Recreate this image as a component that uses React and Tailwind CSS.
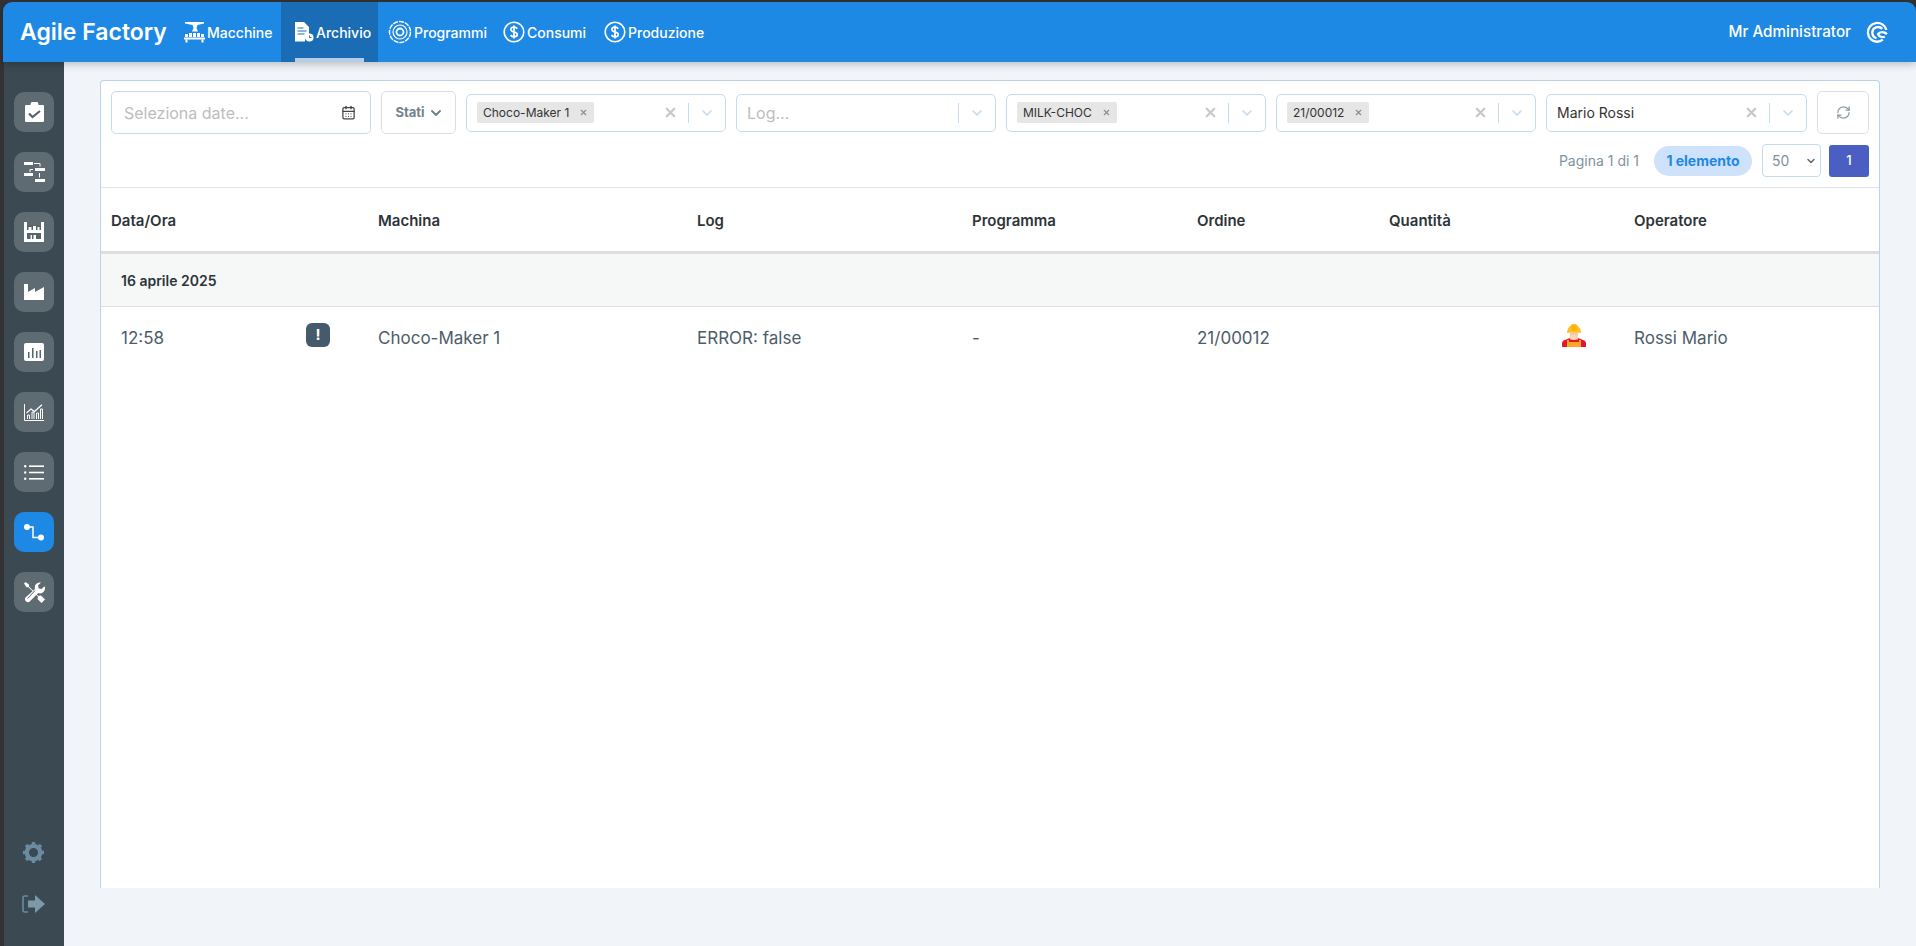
import { ChevronDown, RefreshCw, X, CalendarDays } from 'lucide-react'

// icone barra superiore
const MachineIcon = () => (
  <svg width="21" height="21" viewBox="0 0 21 21" fill="#fff" className="shrink-0">
    <path d="M1 0h19v1.600l-6.500 1.400-1 3 1.500 3.500H8l1.500-3.500-1-3-7.500-1.400z" />
    <rect x="1" y="12" width="3" height="3" /><rect x="5" y="11" width="3" height="4" /><rect x="9" y="11" width="3" height="4" /><rect x="13" y="11" width="3" height="4" /><rect x="17" y="12" width="3" height="3" />
    <rect x="0" y="15.500" width="21" height="2" />
    <rect x="1.500" y="17.500" width="2" height="3" /><rect x="17.500" y="17.500" width="2" height="3" />
  </svg>
)

const ArchiveIcon = () => (
  <svg width="20" height="20" viewBox="0 0 20 20" className="shrink-0">
    <path d="M1 0h9l5 5v9.500a5 5 0 0 0-4 5H1z" fill="#fff" />
    <path d="M3.500 6h6M3.500 9h9M3.500 12h7" stroke="#1a6db5" strokeWidth="1.200" />
    <circle cx="15.500" cy="15.500" r="4" fill="#fff" />
    <path d="M15.500 13.500v2h2" stroke="#1a6db5" strokeWidth="1" fill="none" />
  </svg>
)

const ProgramIcon = () => (
  <svg width="24" height="24" viewBox="0 0 24 24" fill="none" stroke="#fff" className="shrink-0">
    <circle cx="12" cy="12" r="10.500" strokeWidth="1.500" strokeDasharray="5 1" />
    <circle cx="12" cy="12" r="7" strokeWidth="1.200" />
    <circle cx="12" cy="12" r="3.500" strokeWidth="1.800" />
  </svg>
)

const DollarIcon = () => (
  <svg width="22" height="22" viewBox="0 0 22 22" fill="none" className="shrink-0">
    <circle cx="11" cy="11" r="9.800" stroke="#fff" strokeWidth="1.600" />
    <path d="M14.200 7.800c-.6-1.100-1.700-1.600-3.200-1.600-1.800 0-3.100.9-3.100 2.300 0 3.200 6.400 1.700 6.400 5 0 1.500-1.400 2.300-3.300 2.300-1.600 0-2.800-.6-3.400-1.800M11 4.500v13" stroke="#fff" strokeWidth="1.700" />
  </svg>
)

const UserSwirl = () => (
  <svg width="22" height="22" viewBox="0 0 21 21" fill="none" stroke="#fff" strokeWidth="2.200" className="shrink-0">
    <path d="M19.500 8.500A9 9 0 1 0 10.500 19.800c2 0 4-.7 5.500-2" />
    <path d="M15.500 7.500A5.500 5.500 0 0 0 6 11c0 2.500 1.500 4.500 4 5.500" />
    <path d="M20 12.500c-2.500-2.500-7-2.500-8.500 0 1 2.500 4 3.500 6.500 2.500" />
  </svg>
)

// icone barra laterale
const ClipboardIcon = () => (
  <svg width="19" height="20" viewBox="0 0 19 20">
    <path d="M1 3h4.500a4 4 0 0 1 8 0H18a1 1 0 0 1 1 1v15a1 1 0 0 1-1 1H1a1 1 0 0 1-1-1V4a1 1 0 0 1 1-1z" fill="#fff" />
    <path d="M4 11.500l3.500 3.500 7.500-6" stroke="#56646c" strokeWidth="2.200" fill="none" />
  </svg>
)

const FlowIcon = () => (
  <svg width="21" height="20" viewBox="0 0 21 20" fill="#fff">
    <rect x="0" y="0" width="9" height="3" /><rect x="11" y="6" width="10" height="3" /><rect x="0" y="11" width="9" height="3" /><rect x="11" y="17" width="10" height="3" />
    <path d="M10 1.500h6v3" stroke="#fff" fill="none" /><path d="M9 7.500H6v2.500" stroke="#fff" fill="none" /><path d="M15.500 11v4.500" stroke="#fff" fill="none" />
  </svg>
)

const StorageIcon = () => (
  <svg width="20" height="20" viewBox="0 0 20 20">
    <path d="M0 0h3v3h14V0h3v20H0z" fill="#fff" />
    <path d="M3 3h14v5H3z" fill="#56646c" />
    <path d="M4.500 8V5h3v3zM9 8V4h3v4zM13.500 8V5h2v3z" fill="#fff" />
    <path d="M3 11h14v6H3z" fill="#56646c" />
    <path d="M6.500 17v-4H8v4zM9.500 17v-4h2.500v4z" fill="#fff" />
  </svg>
)

const FactoryIcon = () => (
  <svg width="20" height="16" viewBox="0 0 20 16" fill="#fff">
    <path d="M0 0h4v8l7-4v4l9-5v13H0z" />
  </svg>
)

const ReportIcon = () => (
  <svg width="20" height="18" viewBox="0 0 20 18">
    <rect width="20" height="18" rx="2" fill="#fff" />
    <path d="M4 9h1.500v6H4zM8 5h1.500v10H8zM12 8h1.500v7H12zM15.500 7H17v8h-1.500z" fill="#56646c" />
  </svg>
)

const TrendIcon = () => (
  <svg width="20" height="17" viewBox="0 0 20 17" fill="none" stroke="#fff">
    <path d="M.5 0v16.500H20" />
    <path d="M3.500 15v-4h2v4M8 15V8h2v7M12.500 15V9h2v6M16.500 15V5h2v10" strokeWidth="1" />
    <path d="M2.500 9L7 5l3.500 2.500L18 .8" strokeWidth="1.200" />
  </svg>
)

const ListIcon = () => (
  <svg width="20" height="15" viewBox="0 0 20 15" fill="#fff">
    <circle cx="1.200" cy="1.200" r="1.200" /><circle cx="1.200" cy="7.500" r="1.200" /><circle cx="1.200" cy="13.800" r="1.200" />
    <rect x="5" y=".4" width="15" height="1.600" /><rect x="5" y="6.700" width="15" height="1.600" /><rect x="5" y="13" width="15" height="1.600" />
  </svg>
)

const RouteIcon = () => (
  <svg width="20" height="17" viewBox="0 0 20 17" fill="none">
    <path d="M3 3h6v10.500h8" stroke="#fff" strokeWidth="1.500" />
    <circle cx="3" cy="3" r="3" fill="#fff" /><circle cx="17" cy="13.500" r="3" fill="#fff" />
  </svg>
)

const ToolsIcon = () => (
  <svg width="21" height="21" viewBox="0 0 21 21">
    <path d="M1.500 0L5 2.500v2L14.500 14l2.500-.5 4 4-3.500 3.500-4-4 .5-2.500L4.500 5.200h-2L0 1.500z" fill="#fff" />
    <path d="M20.500 4.200l-3 2.800-2.800-.6-.7-2.800 3-3a5 5 0 0 0-6 6.400L1.500 15.500a3 3 0 0 0 4 4.200L14.200 11a5 5 0 0 0 6.300-6.800z" fill="#fff" />
    <path d="M11 8.500L3.500 16.500" stroke="#56646c" strokeWidth="1" />
  </svg>
)

const GearIcon = () => (
  <svg width="23" height="23" viewBox="0 0 24 24" fill="none" stroke="#6b8ba0" strokeWidth="4.500">
    <circle cx="12" cy="12" r="7" />
    <path d="M12 1v3M12 20v3M1 12h3M20 12h3M4.200 4.200l2.100 2.100M17.700 17.700l2.100 2.100M4.200 19.800l2.100-2.100M17.700 6.300l2.100-2.100" strokeWidth="3.500" />
  </svg>
)

const LogoutIcon = () => (
  <svg width="23" height="18" viewBox="0 0 23 18">
    <path d="M6 1H3a2 2 0 0 0-2 2v12a2 2 0 0 0 2 2h3" stroke="#6b8ba0" strokeWidth="1.600" fill="none" />
    <path d="M6 5.500h7V0l10 9-10 9v-5.500H6z" fill="#7c99aa" />
  </svg>
)

const WorkerIcon = () => (
  <svg width="24" height="24" viewBox="0 0 24 24" className="shrink-0">
    <path d="M0 24v-3a4 4 0 0 1 3-4l5-2h8l5 2a4 4 0 0 1 3 4v3z" fill="#e8132d" />
    <path d="M5 17h2v2h10v-2h2v7H5z" fill="#f9a825" />
    <rect x="8" y="10" width="8" height="6.500" fill="#f5c9a0" />
    <path d="M8.500 12h7v1.500a3.500 3.500 0 0 1-7 0z" fill="#f9d7b5" />
    <path d="M5.500 8a6.500 6.500 0 0 1 13 0v0h.5v1.800H5V8z" fill="#fbc02d" />
    <path d="M9.500 1.300h5V8h-5z" fill="#ffb300" />
  </svg>
)

const sideItems = [
  <ClipboardIcon />, <FlowIcon />, <StorageIcon />, <FactoryIcon />, <ReportIcon />, <TrendIcon />, <ListIcon />,
]

const NavItem = ({ icon, label, active, className }) => (
  <div className={`relative flex h-full items-center gap-[2px] ${active ? 'bg-[#1a6db5]' : ''} ${className}`}>
    {icon}
    <span className="text-[14px] font-medium text-white">{label}</span>
    {active && <div className="absolute bottom-0 left-[14px] h-[4px] w-[69px] bg-[#b6cde6]" />}
  </div>
)

const SelectBox = ({ tag, placeholder, value, className = 'w-[260px]' }) => (
  <div className={`flex h-[38px] items-center rounded-[5px] border border-[#c5dcee] bg-white pl-[10px] ${className}`}>
    <div className="flex min-w-0 flex-1 items-center">
      {tag && (
        <div className="flex h-[21px] items-center gap-[10px] rounded-[2px] bg-[#e6e6e6] px-[6px] text-[12px] text-[#333]">
          {tag}
          <X size={9} strokeWidth={3} className="text-[#7c8f9b]" />
        </div>
      )}
      {placeholder && <span className="text-[16px] text-[#bdbdbd]">{placeholder}</span>}
      {value && <span className="text-[14px] text-[#333]">{value}</span>}
    </div>
    {!placeholder && <X size={15} strokeWidth={3.500} className="mr-[10px] text-[#c4c9cc]" />}
    <div className="h-[20px] w-px bg-[#c5dcee]" />
    <div className="flex w-[36px] justify-center">
      <ChevronDown size={16} strokeWidth={2.500} className="text-[#c5dcee]" />
    </div>
  </div>
)

const App = () => {
  return (
    <div className="flex h-[946px] w-full flex-col overflow-hidden bg-[#333333] pt-[2px] font-['Inter',sans-serif]">
      <header className="relative z-10 ml-[3px] flex h-[60px] shrink-0 items-center justify-between rounded-t-[9px] bg-[#1e88e5] shadow-[0_2px_8px_rgba(0,0,0,0.25)]">
        <div className="flex h-full items-center">
          <span className="ml-[17px] w-[164px] text-[23px] leading-none font-semibold whitespace-nowrap text-white">Agile Factory</span>
          <NavItem icon={<MachineIcon />} label="Macchine" className="w-[97px]" />
          <NavItem icon={<ArchiveIcon />} label="Archivio" active className="w-[97px] pl-[13px]" />
          <NavItem icon={<ProgramIcon />} label="Programmi" className="w-[125px] pl-[10px]" />
          <NavItem icon={<DollarIcon />} label="Consumi" className="w-[101px]" />
          <NavItem icon={<DollarIcon />} label="Produzione" />
        </div>
        <div className="mr-[28px] flex items-center gap-[15px]">
          <span className="text-[15.250px] font-medium text-white">Mr Administrator</span>
          <UserSwirl />
        </div>
      </header>

      <div className="flex min-h-0 flex-1 pl-[4px]">
        <aside className="flex w-[60px] shrink-0 flex-col items-center bg-[#3a4952] pt-[30px]">
          <div className="flex flex-col gap-[20px]">
            {sideItems.map((icon, i) => (
              <div key={i} className="flex h-[40px] w-[40px] items-center justify-center rounded-[10px] bg-[#5f6b72]">{icon}</div>
            ))}
            <div className="flex h-[40px] w-[40px] items-center justify-center rounded-[10px] bg-[#1e88e5]"><RouteIcon /></div>
            <div className="flex h-[40px] w-[40px] items-center justify-center rounded-[10px] bg-[#5f6b72]"><ToolsIcon /></div>
          </div>
          <div className="mt-auto mb-[33px] flex flex-col items-center gap-[31px] pr-[2px]">
            <GearIcon />
            <LogoutIcon />
          </div>
        </aside>

        <main className="min-w-0 flex-1 bg-[#f1f5f9] pt-[18px] pr-[36px] pl-[36px]">
          <div className="h-[808px] rounded-t-[4px] border-x border-t border-[#b9d4ea] bg-white">
            <div className="flex items-center gap-[10px] pt-[10px] pl-[10px]">
              <div className="flex h-[43px] w-[260px] items-center justify-between rounded-[5px] border border-[#c5dcee] pr-[14px] pl-[12px]">
                <span className="text-[16px] text-[#bdbdbd]">Seleziona date...</span>
                <CalendarDays size={15} className="text-[#444]" />
              </div>
              <div className="flex h-[43px] w-[75px] items-center justify-center gap-[3px] rounded-[5px] border border-[#dcdfe2] pl-[2px] text-[13px] font-bold text-[#71838f]">
                Stati
                <ChevronDown size={16} strokeWidth={3} />
              </div>
              <SelectBox tag="Choco-Maker 1" />
              <SelectBox placeholder="Log..." />
              <SelectBox tag="MILK-CHOC" />
              <SelectBox tag="21/00012" />
              <SelectBox value="Mario Rossi" className="w-[261px]" />
              <div className="flex h-[43px] w-[52px] items-center justify-center rounded-[5px] border border-[#dcdfe2]">
                <RefreshCw size={15} className="text-[#8a9aa5]" />
              </div>
            </div>

            <div className="mt-[10px] flex h-[33px] items-center justify-end pr-[10px]">
              <span className="mr-[15px] text-[14px] text-[#7f929e]">Pagina 1 di 1</span>
              <span className="mr-[10px] flex h-[30px] w-[98px] items-center justify-center rounded-full bg-[#cfe2fb] text-[14px] font-bold text-[#1e88e5]">1 elemento</span>
              <div className="mr-[8px] flex h-[33px] w-[59px] items-center justify-between rounded-[4px] border border-[#c5dcee] pr-[3px] pl-[9px] text-[14px] text-[#7f929e]">
                50
                <ChevronDown size={12} strokeWidth={3} className="text-[#5f6b72]" />
              </div>
              <div className="flex h-[32px] w-[40px] items-center justify-center rounded-[3px] bg-[#4a5fc1] text-[13px] font-medium text-white">1</div>
            </div>

            <div className="mt-[10px] grid h-[67px] grid-cols-[277px_319px_275px_225px_192px_245px_1fr] items-center border-t border-b-[3px] border-t-[#dde3e8] border-b-[#dcdedf] pt-[3px] text-[15px] font-semibold text-[#2e3438]">
              <span className="pl-[10px]">Data/Ora</span>
              <span>Machina</span>
              <span>Log</span>
              <span>Programma</span>
              <span>Ordine</span>
              <span>Quantità</span>
              <span>Operatore</span>
            </div>

            <div className="flex h-[53px] items-center border-b border-[#dcdfe1] bg-[#f6f8f8] pl-[20px] text-[14px] font-semibold text-[#2e3438]">16 aprile 2025</div>

            <div className="grid h-[64px] grid-cols-[195px_82px_319px_275px_225px_192px_1fr] items-center text-[17px] text-[#4b5d69]">
              <span className="pl-[20px]">12:58</span>
              <span className="mb-[8px] pl-[10px]">
                <span className="flex h-[24px] w-[24px] items-center justify-center rounded-[6px] bg-[#455a6a] text-[15px] font-bold text-white">!</span>
              </span>
              <span>Choco-Maker 1</span>
              <span>ERROR: false</span>
              <span>-</span>
              <span>21/00012</span>
              <span className="flex items-center whitespace-nowrap pl-[173px]">
                <span className="mb-[8px] w-[72px]"><WorkerIcon /></span>
                Rossi Mario
              </span>
            </div>
          </div>
        </main>
      </div>
    </div>
  )
}

export default App
